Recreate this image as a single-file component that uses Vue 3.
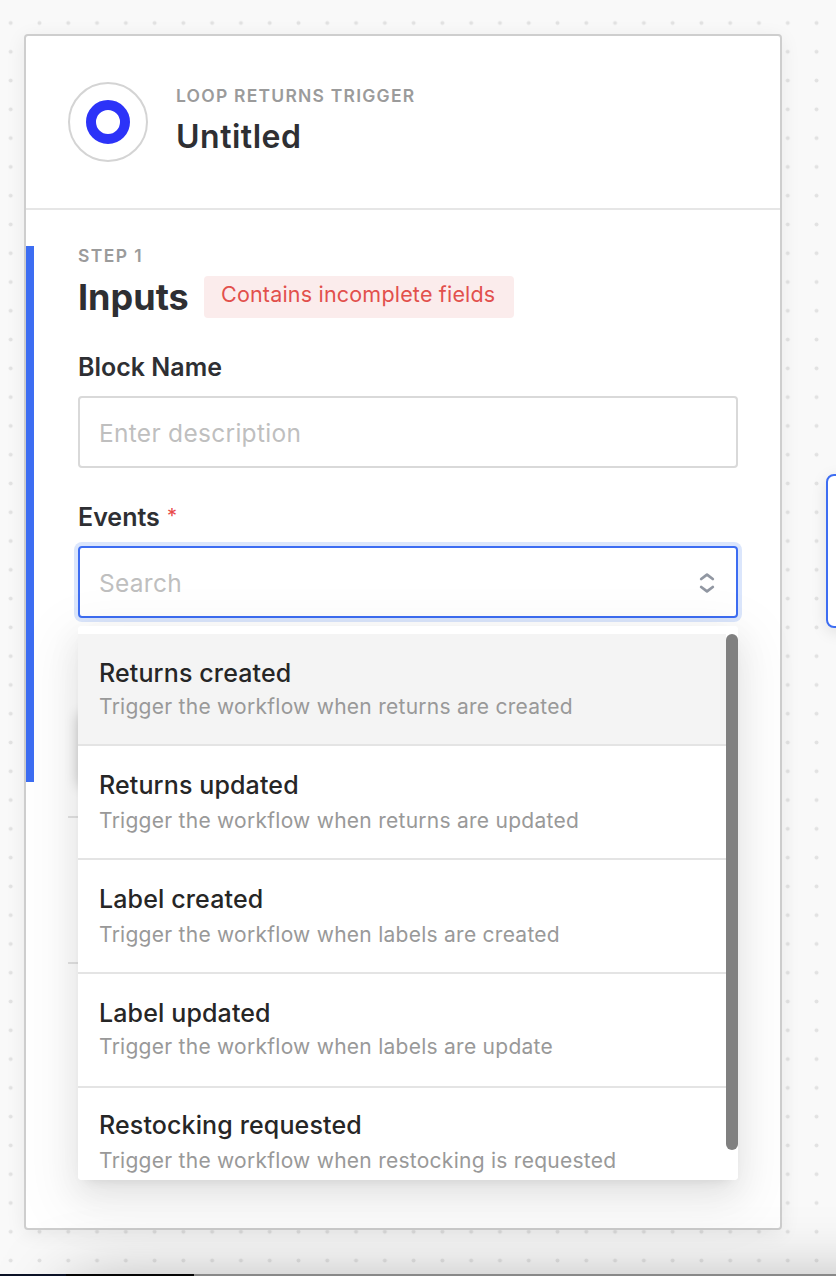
<script setup>
const options = [
  { title: 'Returns created', text: 'Trigger the workflow when returns are created' },
  { title: 'Returns updated', text: 'Trigger the workflow when returns are updated' },
  { title: 'Label created', text: 'Trigger the workflow when labels are created' },
  { title: 'Label updated', text: 'Trigger the workflow when labels are update' },
  { title: 'Restocking requested', text: 'Trigger the workflow when restocking is requested' },
]
</script>

<template>
  <main class="canvas">
    <svg class="dots" width="836" height="1276" aria-hidden="true">
      <defs>
        <pattern id="grid" x="-3.7" y="8.6" width="28.78" height="28.78" patternUnits="userSpaceOnUse">
          <circle cx="14.4" cy="14.4" r="2" fill="#e2e2e2" />
        </pattern>
      </defs>
      <rect width="836" height="1276" fill="url(#grid)" />
    </svg>

    <section class="panel">
      <header class="head">
        <div class="logo">
          <svg width="44" height="44" viewBox="0 0 44 44">
            <circle cx="22" cy="22" r="17" fill="none" stroke="#2c33f8" stroke-width="10" />
          </svg>
        </div>
        <div class="head-text">
          <div class="kicker">LOOP RETURNS TRIGGER</div>
          <h1>Untitled</h1>
        </div>
      </header>

      <div class="step">
        <div class="kicker step-label">STEP 1</div>
        <div class="title-row">
          <h2>Inputs</h2>
          <span class="badge"><span>Contains incomplete fields</span></span>
        </div>
        <label class="label name-label">Block Name</label>
        <div class="field"><span class="ph desc">Enter description</span></div>
        <label class="label events-label">Events <i class="star">*</i></label>
        <div class="field active">
          <span class="ph search">Search</span>
          <svg width="16" height="22" viewBox="0 0 16 22" fill="none" stroke="#9197a2" stroke-width="2.8" stroke-linecap="round" stroke-linejoin="round">
            <path d="M2.2 7 L8 2.6 L13.8 7 M2.2 15 L8 19.4 L13.8 15" />
          </svg>
          <div class="menu">
            <div class="list">
              <div v-for="o in options" :key="o.title" class="option">
                <div class="o-title"><span>{{ o.title }}</span></div>
                <div class="o-text"><span>{{ o.text }}</span></div>
              </div>
            </div>
            <div class="thumb"></div>
          </div>
        </div>
        <div class="button"></div>
      </div>
      <div class="rest"></div>
    </section>

    <div class="node"></div>
    <div class="window"></div>
  </main>
</template>

<style>
body { background: #f9f9f9; }
</style>

<style scoped>
* { box-sizing: border-box; }
.canvas {
  position: relative;
  width: 836px;
  height: 1276px;
  overflow: hidden;
  padding: 34px 0 0 24px;
  background: #f9f9f9;
  font-family: Inter, "Liberation Sans", sans-serif;
  color: #2e2f33;
}
.dots { position: absolute; left: 0; top: 0; }
.panel {
  position: relative;
  width: 758px;
  height: 1196px;
  border: 2px solid #cecece;
  border-radius: 4px;
  background: #fff;
  box-shadow: 0 4px 20px rgba(0, 0, 0, 0.07);
}
.head {
  display: flex;
  height: 174px;
  padding: 46px 42px 0;
  border-bottom: 2px solid #e6e6e6;
}
.logo {
  display: flex;
  align-items: center;
  justify-content: center;
  width: 80px;
  height: 80px;
  border: 2px solid #d4d4d4;
  border-radius: 50%;
}
.head-text { padding: 2px 0 0 28px; }
.kicker {
  font-size: 17.5px;
  line-height: 24px;
  font-weight: 600;
  letter-spacing: 1.22px;
  color: #9b9b9b;
  white-space: nowrap;
}
h1 { margin: 9px 0 0; font-size: 32px; line-height: 40px; font-weight: 600; letter-spacing: 0.5px; }
.step {
  height: 536px;
  margin-top: 36px;
  padding: 0 42px 0 44px;
  border-left: 8px solid #3d6df2;
}
.step-label { height: 30px; line-height: 20px; letter-spacing: 1.4px; }
.title-row { display: flex; height: 42px; gap: 16px; }
h2 { width: 110px; margin: 0; font-size: 36px; line-height: 43px; font-weight: 700; }
.badge {
  width: 310px;
  height: 42px;
  padding-left: 17px;
  border-radius: 4px;
  background: #fbecec;
  color: #e2504c;
  font-size: 21.5px;
  line-height: 37px;
  letter-spacing: 0.19px;
  white-space: nowrap;
}
.label { display: block; font-size: 25px; font-weight: 600; line-height: 30px; }
.name-label { padding-top: 34px; height: 78px; }
.field {
  position: relative;
  display: flex;
  align-items: center;
  justify-content: space-between;
  height: 72px;
  padding: 2px 21px 0 19px;
  border: 2px solid #d9d9d9;
  border-radius: 4px;
}
.ph { color: #bfbfbf; font-size: 24.5px; letter-spacing: 0.29px; }
.events-label { padding-top: 34px; height: 78px; }
.star { margin-left: 1px; color: #e8494a; font-style: normal; font-weight: 400; font-size: 20px; line-height: 0; vertical-align: 3px; }
.active { border-color: #3d6df2; box-shadow: 0 0 0 4px #dbe6fc; }
.menu {
  position: absolute;
  left: -2px;
  top: 78px;
  z-index: 2;
  width: 660px;
  height: 554px;
  padding-top: 8px;
  overflow: hidden;
  border-radius: 4px;
  background: #fff;
}
.active::after {
  content: "";
  position: absolute;
  left: -2px;
  top: 78px;
  z-index: 1;
  width: 660px;
  height: 554px;
  border-radius: 4px;
  box-shadow: 0 6px 12px -8px rgba(0, 0, 0, 0.12), 0 12px 32px rgba(0, 0, 0, 0.08), 0 18px 56px 16px rgba(0, 0, 0, 0.05);
}
.list { width: 648px; }
.option { height: 114px; padding: 23px 0 0 21px; border-bottom: 2px solid #e4e4e4; white-space: nowrap; }
.option:first-child { height: 112px; background: #f4f4f4; }
.option:last-child { padding-top: 21px; border: 0; }
.o-title { height: 34px; font-size: 25px; line-height: 32px; font-weight: 500; color: #262626; letter-spacing: 0.13px; }
.o-text { font-size: 21px; line-height: 36px; color: #999; letter-spacing: 0.26px; }
.option:nth-child(1) .o-text, .option:nth-child(4) .o-text { line-height: 31px; }
.thumb { position: absolute; right: 0; top: 8px; width: 12px; height: 516px; border-radius: 6px; background: #808080; }
.button { width: 644px; height: 72px; margin-top: 96px; border-radius: 4px; box-shadow: 0 0 14px rgba(0, 0, 0, 0.2); }
.rest { height: 148px; margin: 34px 42px 0; border-top: 2px solid #e4e4e4; border-bottom: 2px solid #e4e4e4; }
.node {
  position: absolute;
  left: 826px;
  top: 474px;
  width: 200px;
  height: 154px;
  border: 2px solid #3d6df2;
  border-radius: 8px;
  background: #fff;
  box-shadow: 0 4px 16px rgba(0, 0, 0, 0.1);
}
.window {
  position: absolute;
  left: 0;
  top: 1274px;
  width: 836px;
  height: 2px;
}
.window::before {
  content: "";
  position: absolute;
  left: 70px;
  top: 16px;
  width: 900px;
  height: 200px;
  box-shadow: 0 0 76px rgba(0, 0, 0, 0.36);
}
.window::after {
  content: "";
  position: absolute;
  inset: 0;
  background: linear-gradient(90deg, #0b1226 0 66px, #050505 66px 194px, #888 194px);
}
</style>
